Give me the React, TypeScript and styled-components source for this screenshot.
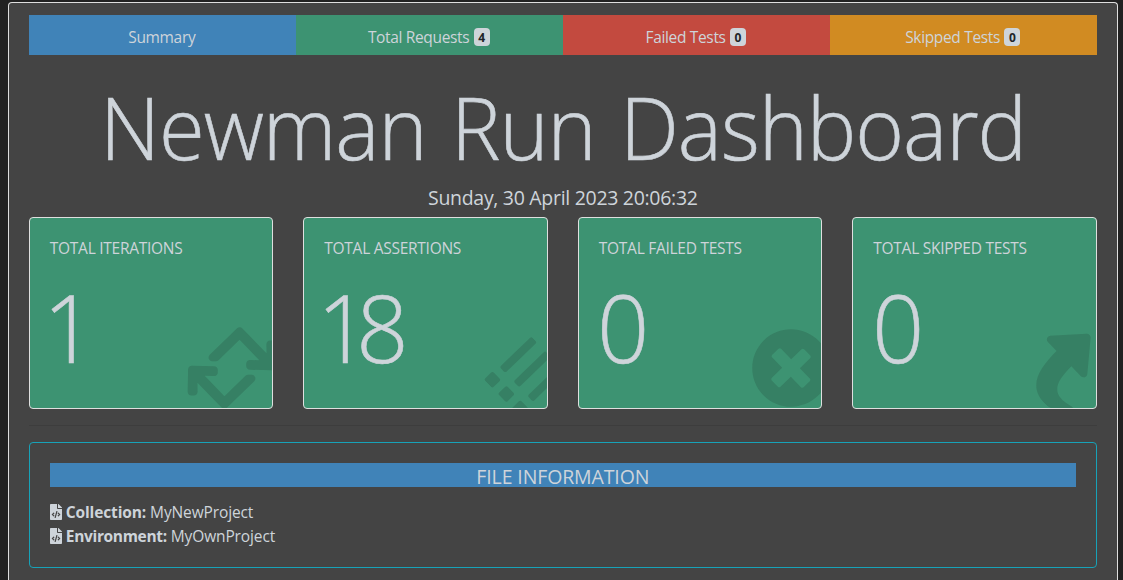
import React from "react";
import styled, { createGlobalStyle } from "styled-components";
import { FaFileCode, FaList, FaPlusCircle, FaRetweet, FaShare } from "react-icons/fa";

const Global = createGlobalStyle`
  *, *::before, *::after { box-sizing: border-box; }
  html, body { margin: 0; height: 580px; overflow: hidden; background: #222; }
  body {
    color: #ced4da;
    font: 400 15.5px/24px "Open Sans", "Noto Sans", sans-serif;
  }
`;

const Page = styled.main`
  margin: 0 5px 0 8px;
  height: 578px;
  padding: 12px 20.2px 0 19.8px;
  background: #444;
  border: 1px solid #dfdfdf;
  border-bottom: 0;
  border-radius: 4px 4px 0 0;
`;

const Frame = styled.div`
  height: 580px;
  padding-top: 2px;
  overflow: hidden;
`;

const Tabs = styled.nav`
  display: grid;
  grid-template-columns: repeat(4, 1fr);
  height: 40px;
`;

const Tab = styled.a<{ $color: string }>`
  display: flex;
  align-items: center;
  justify-content: center;
  gap: 4.4px;
  padding: 3px 1px 0 0;
  background: ${(p) => p.$color};
`;

const Fit = styled.span<{ $spacing: number }>`
  letter-spacing: ${(p) => p.$spacing}px;
  white-space: nowrap;
`;

const Badge = styled.span`
  width: 16px;
  height: 18px;
  margin-top: 1px;
  border-radius: 4px;
  background: #ced4da;
  color: #212529;
  font-size: 12px;
  font-weight: 700;
  line-height: 19px;
  text-align: center;
`;

const Title = styled.h1`
  display: flex;
  justify-content: center;
  margin: 19px 0 0;
  height: 106px;
  font-size: 86.5px;
  font-weight: 300;
  line-height: 105px;
  letter-spacing: -1.1px;
  word-spacing: 4px;
  white-space: nowrap;
  transform: scaleX(0.963);
  -webkit-text-stroke: 0.6px #ced4da;
`;

const RunDate = styled.h5`
  margin: 5px 0 0;
  height: 32px;
  font-size: 19.5px;
  font-weight: 400;
  line-height: 26px;
  text-align: center;
`;

const Stats = styled.section`
  display: grid;
  grid-template-columns: repeat(4, 1fr);
  gap: 30px;
`;

const StatCard = styled.article`
  position: relative;
  height: 192px;
  padding: 20px;
  overflow: hidden;
  background: #3d9372;
  border: 1px solid #dfdfdf;
  border-radius: 4px;
`;

const StatLabel = styled.h6`
  margin: 0;
  font-size: 15.5px;
  font-weight: 400;
  line-height: 21px;
`;

const StatValue = styled.div<{ $shift: number }>`
  margin: 10px 0 0 ${(p) => p.$shift}px;
  font-size: 94.5px;
  font-weight: 300;
  line-height: 115px;
  letter-spacing: -13.5px;
  transform: scaleX(0.97);
  transform-origin: left;
  -webkit-text-stroke: 0.6px #ced4da;
`;

const StatIcon = styled.div<{ $width: number; $height: number }>`
  position: absolute;
  right: -10px;
  bottom: 0;
  display: flex;
  color: rgba(20, 20, 20, 0.15);
  transform: rotate(-44deg);

  svg {
    width: ${(p) => p.$width}px;
    height: ${(p) => p.$height}px;
  }
`;

const Divider = styled.hr`
  margin: 16px 0;
  border: 0;
  border-top: 1px solid rgba(0, 0, 0, 0.1);
`;

const InfoCard = styled.section`
  height: 126px;
  padding: 20px;
  border: 1px solid #17a2b8;
  border-radius: 4px;
`;

const InfoHeading = styled.h5`
  margin: 0 0 13px;
  height: 24px;
  background: #4083b8;
  font-size: 19.5px;
  font-weight: 400;
  line-height: 28px;
  text-align: center;
`;

const InfoRow = styled.div`
  display: flex;
  align-items: center;
  gap: 4px;
  height: 24px;

  svg { width: 12px; height: 16px; }
`;

const tabs = [
  { label: "Summary", color: "#4083b8" },
  { label: "Total Requests", color: "#3d9372", count: 4 },
  { label: "Failed Tests", color: "#c34a3f", count: 0 },
  { label: "Skipped Tests", color: "#d18b22", count: 0 },
];

const stats = [
  { label: "TOTAL ITERATIONS", value: 1, Icon: FaRetweet, width: 100, height: 80, shift: -7 },
  { label: "TOTAL ASSERTIONS", value: 18, Icon: FaList, width: 64, height: 64, shift: -7 },
  { label: "TOTAL FAILED TESTS", value: 0, Icon: FaPlusCircle, width: 80, height: 80, shift: -1.5 },
  { label: "TOTAL SKIPPED TESTS", value: 0, Icon: FaShare, width: 80, height: 80, shift: -1.5 },
];

const files = [
  { label: "Collection:", value: "MyNewProject", spacing: -0.13 },
  { label: "Environment:", value: "MyOwnProject", spacing: -0.33 },
];

export default function App() {
  return (
    <Frame>
      <Global />
      <Page>
        <Tabs>
          {tabs.map((t) => (
            <Tab key={t.label} $color={t.color}>
              <Fit $spacing={-0.34}>{t.label}</Fit>
              {t.count !== undefined && <Badge>{t.count}</Badge>}
            </Tab>
          ))}
        </Tabs>
        <Title>Newman Run Dashboard</Title>
        <RunDate><Fit $spacing={-0.3}>Sunday, 30 April 2023 20:06:32</Fit></RunDate>
        <Stats>
          {stats.map(({ label, value, Icon, width, height, shift }) => (
            <StatCard key={label}>
              <StatIcon $width={width} $height={height}><Icon /></StatIcon>
              <StatLabel><Fit $spacing={-0.27}>{label}</Fit></StatLabel>
              <StatValue $shift={shift}>{value}</StatValue>
            </StatCard>
          ))}
        </Stats>
        <Divider />
        <InfoCard>
          <InfoHeading><Fit $spacing={-0.12}>FILE INFORMATION</Fit></InfoHeading>
          {files.map((f) => (
            <InfoRow key={f.label}>
              <FaFileCode />
              <b><Fit $spacing={f.spacing}>{f.label}</Fit></b>
              <Fit $spacing={-0.13}>{f.value}</Fit>
            </InfoRow>
          ))}
        </InfoCard>
      </Page>
    </Frame>
  );
}
